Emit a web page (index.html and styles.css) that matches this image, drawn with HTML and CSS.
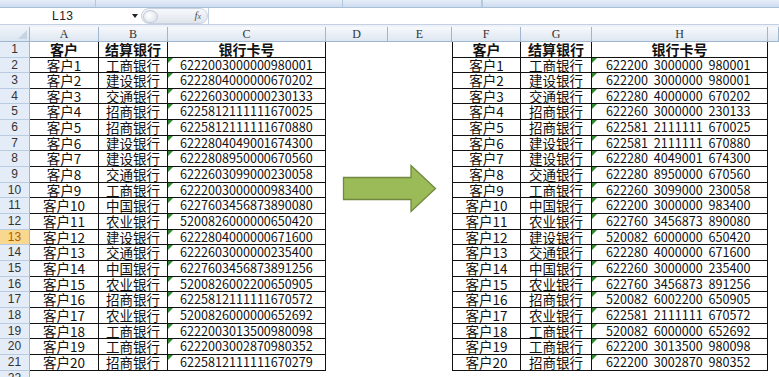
FILE: index.html
```html
<!DOCTYPE html>
<html lang="zh-CN">
<head>
<meta charset="utf-8">
<link rel="stylesheet" href="styles.css">
</head>
<body>
<div class="app">
  <div class="ribbon"><span class="rgroup g1"></span><span class="rgroup g2"></span><span class="rgroup g3"></span><span class="rgroup g4"></span></div>
  <div class="fbar">
    <div class="namebox"><span class="name">L13</span><span class="dd"></span></div>
    <div class="fxpill"><span class="knob"></span><span class="fx"><i>f</i><small>x</small></span></div>
    <div class="finput"></div>
  </div>
  <div class="gap"></div>
  <div class="sheet">
    <div class="row hdr"><div class="corner"></div><div class="ch">A</div><div class="ch">B</div><div class="ch">C</div><div class="ch">D</div><div class="ch">E</div><div class="ch">F</div><div class="ch">G</div><div class="ch">H</div><div class="ch"></div></div>
    <div class="row r1"><div class="rh">1</div><div class="t b">客户</div><div class="t b">结算银行</div><div class="t b">银行卡号</div><div></div><div></div><div class="t tl b">客户</div><div class="t b">结算银行</div><div class="t b">银行卡号</div><div></div></div>
    <div class="row"><div class="rh">2</div><div class="t">客户1</div><div class="t">工商银行</div><div class="t n">6222003000000980001</div><div></div><div></div><div class="t tl">客户1</div><div class="t">工商银行</div><div class="t n s">622200 3000000 980001</div><div></div></div>
    <div class="row"><div class="rh">3</div><div class="t">客户2</div><div class="t">建设银行</div><div class="t n">6222804000000670202</div><div></div><div></div><div class="t tl">客户2</div><div class="t">建设银行</div><div class="t n s">622200 3000000 980001</div><div></div></div>
    <div class="row"><div class="rh">4</div><div class="t">客户3</div><div class="t">交通银行</div><div class="t n">6222603000000230133</div><div></div><div></div><div class="t tl">客户3</div><div class="t">交通银行</div><div class="t n s">622280 4000000 670202</div><div></div></div>
    <div class="row"><div class="rh">5</div><div class="t">客户4</div><div class="t">招商银行</div><div class="t n">6225812111111670025</div><div></div><div></div><div class="t tl">客户4</div><div class="t">招商银行</div><div class="t n s">622260 3000000 230133</div><div></div></div>
    <div class="row"><div class="rh">6</div><div class="t">客户5</div><div class="t">招商银行</div><div class="t n">6225812111111670880</div><div></div><div></div><div class="t tl">客户5</div><div class="t">招商银行</div><div class="t n s">622581 2111111 670025</div><div></div></div>
    <div class="row"><div class="rh">7</div><div class="t">客户6</div><div class="t">建设银行</div><div class="t n">6222804049001674300</div><div></div><div></div><div class="t tl">客户6</div><div class="t">建设银行</div><div class="t n s">622581 2111111 670880</div><div></div></div>
    <div class="row"><div class="rh">8</div><div class="t">客户7</div><div class="t">建设银行</div><div class="t n">6222808950000670560</div><div></div><div></div><div class="t tl">客户7</div><div class="t">建设银行</div><div class="t n s">622280 4049001 674300</div><div></div></div>
    <div class="row"><div class="rh">9</div><div class="t">客户8</div><div class="t">交通银行</div><div class="t n">6222603099000230058</div><div class="arrowcell"><svg class="arrow" width="96" height="50" viewBox="0 0 96 50"><path d="M1.5 13.5 H69 V1.5 L93.5 24.5 L69 47.5 V35.5 H1.5 Z" fill="#9bbb59" stroke="#71893f" stroke-width="1.3"/></svg></div><div></div><div class="t tl">客户8</div><div class="t">交通银行</div><div class="t n s">622280 8950000 670560</div><div></div></div>
    <div class="row"><div class="rh">10</div><div class="t">客户9</div><div class="t">工商银行</div><div class="t n">6222003000000983400</div><div></div><div></div><div class="t tl">客户9</div><div class="t">工商银行</div><div class="t n s">622260 3099000 230058</div><div></div></div>
    <div class="row"><div class="rh">11</div><div class="t">客户10</div><div class="t">中国银行</div><div class="t n">6227603456873890080</div><div></div><div></div><div class="t tl">客户10</div><div class="t">中国银行</div><div class="t n s">622200 3000000 983400</div><div></div></div>
    <div class="row"><div class="rh">12</div><div class="t">客户11</div><div class="t">农业银行</div><div class="t n">5200826000000650420</div><div></div><div></div><div class="t tl">客户11</div><div class="t">农业银行</div><div class="t n s">622760 3456873 890080</div><div></div></div>
    <div class="row"><div class="rh sel">13</div><div class="t">客户12</div><div class="t">建设银行</div><div class="t n">6222804000000671600</div><div></div><div></div><div class="t tl">客户12</div><div class="t">建设银行</div><div class="t n s">520082 6000000 650420</div><div></div></div>
    <div class="row"><div class="rh">14</div><div class="t">客户13</div><div class="t">交通银行</div><div class="t n">6222603000000235400</div><div></div><div></div><div class="t tl">客户13</div><div class="t">交通银行</div><div class="t n s">622280 4000000 671600</div><div></div></div>
    <div class="row"><div class="rh">15</div><div class="t">客户14</div><div class="t">中国银行</div><div class="t n">6227603456873891256</div><div></div><div></div><div class="t tl">客户14</div><div class="t">中国银行</div><div class="t n s">622260 3000000 235400</div><div></div></div>
    <div class="row"><div class="rh">16</div><div class="t">客户15</div><div class="t">农业银行</div><div class="t n">5200826002200650905</div><div></div><div></div><div class="t tl">客户15</div><div class="t">农业银行</div><div class="t n s">622760 3456873 891256</div><div></div></div>
    <div class="row"><div class="rh">17</div><div class="t">客户16</div><div class="t">招商银行</div><div class="t n">6225812111111670572</div><div></div><div></div><div class="t tl">客户16</div><div class="t">招商银行</div><div class="t n s">520082 6002200 650905</div><div></div></div>
    <div class="row"><div class="rh">18</div><div class="t">客户17</div><div class="t">农业银行</div><div class="t n">5200826000000652692</div><div></div><div></div><div class="t tl">客户17</div><div class="t">农业银行</div><div class="t n s">622581 2111111 670572</div><div></div></div>
    <div class="row"><div class="rh">19</div><div class="t">客户18</div><div class="t">工商银行</div><div class="t n">6222003013500980098</div><div></div><div></div><div class="t tl">客户18</div><div class="t">工商银行</div><div class="t n s">520082 6000000 652692</div><div></div></div>
    <div class="row"><div class="rh">20</div><div class="t">客户19</div><div class="t">工商银行</div><div class="t n">6222003002870980352</div><div></div><div></div><div class="t tl">客户19</div><div class="t">工商银行</div><div class="t n s">622200 3013500 980098</div><div></div></div>
    <div class="row"><div class="rh">21</div><div class="t">客户20</div><div class="t">招商银行</div><div class="t n">6225812111111670279</div><div></div><div></div><div class="t tl">客户20</div><div class="t">招商银行</div><div class="t n s">622200 3002870 980352</div><div></div></div>
    <div class="row"><div class="rh">22</div><div></div><div></div><div></div><div></div><div></div><div></div><div></div><div></div><div></div></div>
  </div>
</div>
</body>
</html>
```
FILE: styles.css
```css
* { box-sizing: border-box; }
html, body { margin: 0; padding: 0; background: #fff; }
.app {
  width: 779px;
  height: 377px;
  overflow: hidden;
  font-family: "Noto Sans CJK SC", "Noto Sans", sans-serif;
  color: #111;
  display: flex;
  flex-direction: column;
}
.ribbon {
  height: 8px;
  flex: none;
  background: linear-gradient(#e6eef9, #cddcef);
  border-bottom: 1px solid #a9bfd6;
  display: flex;
}
.rgroup { height: 100%; border-right: 1px solid #b5c8df; }
.g1 { width: 96px; }
.g2 { width: 247px; }
.g3 { width: 139px; }
.fbar {
  height: 17px;
  flex: none;
  display: flex;
  background: #fff;
  border-bottom: 1px solid #c3d1e3;
}
.namebox {
  width: 140px;
  display: flex;
  align-items: center;
}
.name {
  font-family: "Liberation Sans", sans-serif;
  font-size: 12px;
  line-height: 14px;
  color: #222;
  margin-left: 52px;
  letter-spacing: 0.5px;
}
.dd {
  margin-left: 58px;
  width: 0; height: 0;
  border-left: 3px solid transparent;
  border-right: 3px solid transparent;
  border-top: 4px solid #222;
}
.fxpill {
  width: 67px;
  display: flex;
  align-items: center;
  justify-content: space-between;
  background: linear-gradient(#f6f8fb, #dfe5ed);
  border: 1px solid #c9d2de;
  border-radius: 9px;
  margin: 0 0 0 1px;
  padding: 0 6px 0 1px;
}
.knob {
  width: 15px; height: 13px;
  border-radius: 50%;
  background: radial-gradient(circle at 40% 40%, #ffffff, #d6dde7);
  border: 1px solid #c2cad6;
}
.fx {
  font-family: "Liberation Serif", serif;
  font-size: 11px;
  line-height: 12px;
  color: #555;
  font-style: italic;
}
.fx small { font-size: 8px; }
.finput { flex: 1; border-left: 1px solid #c3d1e3; }
.gap { height: 2px; flex: none; background: #eef2f8; }
.sheet { flex: 1; display: flex; flex-direction: column; }
.row {
  display: grid;
  grid-template-columns: 30px 69px 69px 158px 62px 64px 69px 71px 176px 1fr;
  height: 15.66px;
  flex: none;
  font-size: 13.5px;
  line-height: 14.6px;
}
.row.hdr { height: 15px; }
.row.r1 { height: 15.5px; }
.corner {
  background: linear-gradient(#eef3f9, #dbe5f1);
  border-right: 1px solid #9eb6ce;
  border-bottom: 1px solid #9eb6ce;
  position: relative;
}
.corner::after {
  content: "";
  position: absolute;
  right: 2px; bottom: 2px;
  border-left: 9px solid transparent;
  border-bottom: 9px solid #c6d3e2;
}
.ch {
  background: linear-gradient(#f7f9fc, #dde6f1);
  border-right: 1px solid #9eb6ce;
  border-bottom: 1px solid #9eb6ce;
  text-align: center;
  font-family: "Liberation Serif", serif;
  font-size: 12px;
  color: #333;
  line-height: 14px;
}
.rh {
  background: #e4ecf7;
  border-right: 1px solid #9eb6ce;
  border-bottom: 1px solid #b8cbe0;
  text-align: center;
  font-family: "Liberation Sans", sans-serif;
  font-size: 12px;
  color: #333;
}
.rh.sel { background: #f8d78f; color: #b06000; }
.t {
  border-right: 1px solid #111;
  border-bottom: 1px solid #111;
  text-align: center;
  white-space: nowrap;
}
.t.tl { border-left: 1px solid #111; }
.t.b { font-weight: 700; font-size: 14px; }
.t.n {
  text-align: left;
  padding-left: 12px;
  position: relative;
  font-size: 12.6px;
}
.t.n:not(.b)::before {
  content: "";
  position: absolute;
  left: 0; top: 0;
  border-top: 5px solid #2f8a2f;
  border-right: 5px solid transparent;
}
.t.n.b { text-align: center; padding-left: 0; }
.t.s { padding-left: 14px; word-spacing: 3px; }
.arrowcell { position: relative; }
.arrow { position: absolute; left: 16px; top: -3px; overflow: visible; }
```
